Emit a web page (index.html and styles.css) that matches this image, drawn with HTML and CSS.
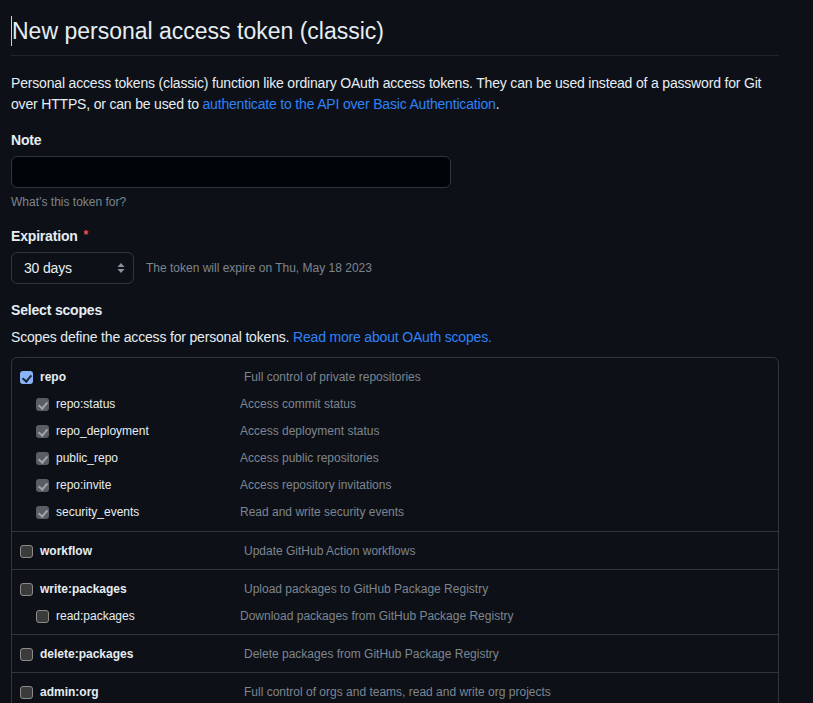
FILE: index.html
```html
<!DOCTYPE html>
<html lang="en">
<head>
<meta charset="utf-8">
<title>New personal access token (classic)</title>
<link rel="stylesheet" href="styles.css">
</head>
<body>
<main class="page">
  <h1 class="subhead"><span class="caret"></span>New personal access token (classic)</h1>
  <p class="intro">Personal access tokens (classic) function like ordinary OAuth access tokens. They can be used instead of a password for Git over HTTPS, or can be used to <a href="#">authenticate to the API over Basic Authentication</a>.</p>

  <div class="field">
    <label class="label">Note</label>
    <div class="input"></div>
    <div class="note">What’s this token for?</div>
  </div>

  <div class="field field-exp">
    <label class="label">Expiration <span class="req">*</span></label>
    <div class="exp-row">
      <div class="select">30 days
        <svg class="updown" width="8" height="12" viewBox="0 0 8 12"><path d="M4 1 L7.5 5 H0.5 Z M4 11 L0.5 7 H7.5 Z" fill="#8b949e"/></svg>
      </div>
      <span class="exp-note">The token will expire on Thu, May 18 2023</span>
    </div>
  </div>

  <div class="field field-scopes">
    <div class="label">Select scopes</div>
    <p class="scopes-desc">Scopes define the access for personal tokens. <a href="#">Read more about OAuth scopes.</a></p>
  </div>

  <div class="scopes">
    <div class="group">
      <div class="row top"><span class="cb checked"></span><span class="name">repo</span><span class="desc">Full control of private repositories</span></div>
      <div class="row sub"><span class="cb disabled"></span><span class="name">repo:status</span><span class="desc">Access commit status</span></div>
      <div class="row sub"><span class="cb disabled"></span><span class="name">repo_deployment</span><span class="desc">Access deployment status</span></div>
      <div class="row sub"><span class="cb disabled"></span><span class="name">public_repo</span><span class="desc">Access public repositories</span></div>
      <div class="row sub"><span class="cb disabled"></span><span class="name">repo:invite</span><span class="desc">Access repository invitations</span></div>
      <div class="row sub"><span class="cb disabled"></span><span class="name">security_events</span><span class="desc">Read and write security events</span></div>
    </div>
    <div class="group">
      <div class="row top"><span class="cb"></span><span class="name">workflow</span><span class="desc">Update GitHub Action workflows</span></div>
    </div>
    <div class="group">
      <div class="row top"><span class="cb"></span><span class="name">write:packages</span><span class="desc">Upload packages to GitHub Package Registry</span></div>
      <div class="row sub"><span class="cb"></span><span class="name">read:packages</span><span class="desc">Download packages from GitHub Package Registry</span></div>
    </div>
    <div class="group">
      <div class="row top"><span class="cb"></span><span class="name">delete:packages</span><span class="desc">Delete packages from GitHub Package Registry</span></div>
    </div>
    <div class="group">
      <div class="row top"><span class="cb"></span><span class="name">admin:org</span><span class="desc">Full control of orgs and teams, read and write org projects</span></div>
    </div>
  </div>
</main>
</body>
</html>
```

FILE: styles.css
```css
* { box-sizing: border-box; }
html, body {
  margin: 0;
  background: #0d1117;
  color: #e6edf3;
  font-family: "Liberation Sans", Arial, sans-serif;
  font-size: 14px;
  line-height: 21px;
  letter-spacing: -0.18px;
  overflow: hidden;
}
a { color: #2f81f7; text-decoration: none; }
.page {
  width: 768px;
  margin-left: 11px;
}
.subhead {
  margin: 13px 0 0;
  font-size: 23px;
  font-weight: 400;
  line-height: 36px;
  letter-spacing: 0;
  padding-bottom: 6px;
  border-bottom: 1px solid #21262d;
}
.caret {
  display: inline-block;
  width: 1px;
  height: 30px;
  background: #c9d1d9;
  vertical-align: -7px;
}
.intro {
  margin: 17px 0 0;
}
.field { margin-top: 15px; }
.label {
  display: block;
  font-weight: 700;
  font-size: 14px;
  line-height: 21px;
}
.req { color: #f85149; font-size: 12px; vertical-align: 2px; margin-left: 2px; }
.input {
  margin-top: 5px;
  width: 440px;
  height: 32px;
  background: #010409;
  border: 1px solid #30363d;
  border-radius: 6px;
}
.note {
  margin-top: 5px;
  font-size: 12px;
  line-height: 18px;
  color: #7d8590;
  letter-spacing: 0;
}
.field-exp { margin-top: 14px; }
.exp-row {
  margin-top: 5px;
  display: flex;
  align-items: center;
  gap: 12px;
}
.select {
  width: 123px;
  height: 32px;
  border: 1px solid #30363d;
  border-radius: 6px;
  background: #0d1117;
  display: flex;
  align-items: center;
  justify-content: space-between;
  padding: 0 8px 0 12px;
  font-size: 14px;
}
.updown { display: block; }
.exp-note {
  font-size: 12px;
  color: #7d8590;
  letter-spacing: 0;
}
.field-scopes { margin-top: 16px; }
.scopes-desc { margin: 6px 0 0; }
.scopes {
  margin-top: 9px;
  border: 1px solid #30363d;
  border-radius: 6px;
  letter-spacing: 0;
}
.group {
  padding: 6px 0 4px 8px;
  border-top: 1px solid #30363d;
}
.group:first-child { border-top: 0; padding-top: 6px; padding-bottom: 5px; }
.row {
  display: flex;
  align-items: center;
  height: 27px;
  font-size: 12px;
}
.cb {
  flex: none;
  width: 13px;
  height: 13px;
  border-radius: 3px;
  border: 1px solid #8b8b8b;
  background: #3b3b3b;
  margin-right: 7px;
  position: relative;
}
.cb.checked, .cb.disabled {
  border: 0;
}
.cb.checked { background: #8ab4f8; }
.cb.disabled { background: #5a5d61; }
.cb.checked::after, .cb.disabled::after {
  content: "";
  position: absolute;
  left: 4px;
  top: 1.5px;
  width: 4px;
  height: 7px;
  border-right: 2px solid #1f2a3a;
  border-bottom: 2px solid #1f2a3a;
  transform: rotate(40deg);
}
.cb.disabled::after { border-color: #a0a4a8; }
.row.top .name { width: 204px; font-weight: 700; }
.row.sub { padding-left: 16px; }
.row.sub .name { width: 184px; }
.name { flex: none; color: #e6edf3; }
.desc { color: #7d8590; }
```
